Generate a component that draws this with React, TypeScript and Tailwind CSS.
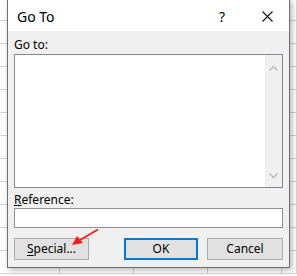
import React from "react";

const font = { fontFamily: '"Noto Sans", "Open Sans", sans-serif' };

function SheetGrid() {
    const rows = Array.from({ length: 12 });
    const cols = ["w-[60px]", "w-[74px]", "w-[74px]", "w-[74px]", "flex-1"];
    return (
        <div className="flex flex-col w-full h-full bg-white">
            {rows.map((_, r) => (
                <div key={r} className={"flex shrink-0 " + (r === 0 ? "h-[21px]" : "h-[23px]")}>
                    {cols.map((c, i) => (
                        <div key={i} className={c + " border-r border-b border-[#d4d4d4]"} />
                    ))}
                </div>
            ))}
        </div>
    );
}

function Chevron({ up }: { up?: boolean }) {
    return (
        <svg width="9" height="6" viewBox="0 0 9 6">
            <path
                d={up ? "M0.5 5.5 L4.5 1.5 L8.5 5.5" : "M0.5 0.5 L4.5 4.5 L8.5 0.5"}
                fill="none"
                stroke="#c2c2c2"
                strokeWidth="1.6"
            />
        </svg>
    );
}

export default function App() {
    return (
        <div className="relative w-[297px] h-[276px] overflow-hidden" style={font}>
            <SheetGrid />

            <div className="absolute left-[7px] top-[-1px] w-[283px] h-[269px] border border-[#6e6e6e] bg-[#f0f0f0] flex flex-col shadow-[2px_2px_6px_rgba(0,0,0,0.3)]">
                {/* title bar */}
                <div className="h-[31px] bg-white flex items-center pl-[9px] pr-[16px] shrink-0">
                    <div className="text-[14px] text-black leading-none pt-[2px]">Go To</div>
                    <div className="ml-auto text-[14px] text-black leading-none pt-[2px] mr-[37px]">?</div>
                    <svg width="11" height="11" viewBox="0 0 11 11" className="mt-[1px]">
                        <path d="M0.5 0.5 L10.5 10.5 M10.5 0.5 L0.5 10.5" stroke="#111" strokeWidth="1.1" />
                    </svg>
                </div>

                {/* body */}
                <div className="flex flex-col px-[6px] text-[12px] text-black">
                    <div className="h-[15px] leading-[15px] mt-[6px] mb-[2px]">Go to:</div>
                    <div className="h-[134px] border border-[#828790] bg-white flex">
                        <div className="flex-1" />
                        <div className="w-[17px] bg-[#f0f0f0] flex flex-col items-center justify-between pt-[10px] pb-[8px]">
                            <Chevron up />
                            <Chevron />
                        </div>
                    </div>
                    <div className="h-[15px] leading-[15px] mt-[4px] mb-[1px]">
                        <span className="underline underline-offset-1">R</span>eference:
                    </div>
                    <div className="h-[20px] border border-[#8f8f8f] bg-white" />
                    <div className="flex items-center mt-[10px]">
                        <button className="w-[75px] h-[22px] border border-[#adadad] bg-[#e1e1e1] text-[12px] leading-none">
                            <span className="underline underline-offset-2">S</span>pecial...
                        </button>
                        <button className="ml-auto w-[74px] h-[22px] border-2 border-[#0078d7] bg-[#e1e1e1] text-[12px] leading-none">
                            OK
                        </button>
                        <button className="ml-[9px] w-[76px] h-[22px] border border-[#adadad] bg-[#e1e1e1] text-[12px] leading-none">
                            Cancel
                        </button>
                    </div>
                </div>
            </div>

            {/* red annotation arrow */}
            <svg className="absolute left-0 top-0 pointer-events-none" width="297" height="276" viewBox="0 0 297 276">
                <line x1="98" y1="229.5" x2="80" y2="240" stroke="#ff1a1a" strokeWidth="1.8" />
                <path d="M72 245 L77 236 L83 243 Z" fill="#ff1a1a" />
            </svg>
        </div>
    );
}
